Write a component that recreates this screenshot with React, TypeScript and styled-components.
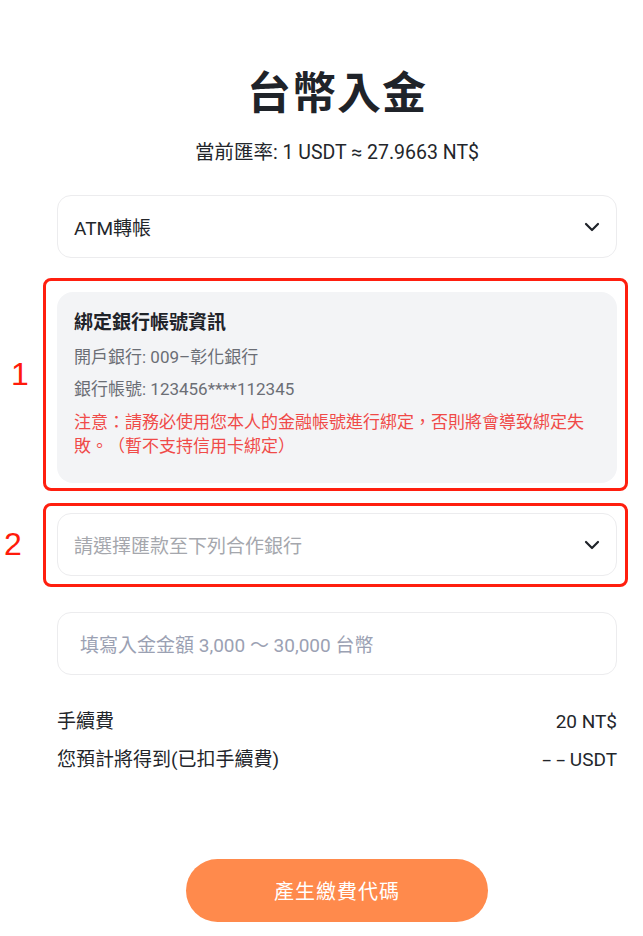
import React from "react";
import styled, { createGlobalStyle } from "styled-components";

const Global = createGlobalStyle`
  html, body { margin: 0; padding: 0; background: #ffffff; }
  body { font-family: Roboto, "Noto Sans CJK TC", "Noto Sans", sans-serif; -webkit-font-smoothing: antialiased; text-spacing-trim: space-all; }
  * { box-sizing: border-box; }
`;

const Page = styled.div`
  width: 643px;
  min-height: 936px;
  padding: 66px 26px 0 57px;
  display: flex;
  flex-direction: column;
`;

const Title = styled.h1`
  margin: 0;
  text-align: center;
  font-size: 44px;
  line-height: 56px;
  font-weight: 700;
  color: #1f2329;
  letter-spacing: 1px;
`;

const Rate = styled.div`
  margin-top: 18px;
  text-align: center;
  font-size: 19.5px;
  line-height: 26px;
  color: #23262b;
`;

const SelectBox = styled.div<{ $mt?: number }>`
  margin-top: ${(p) => p.$mt ?? 0}px;
  height: 63px;
  border: 1px solid #ececee;
  border-radius: 14px;
  background: #fff;
  display: flex;
  align-items: center;
  justify-content: space-between;
  padding: 0 16px 0 16px;
`;

const SelectText = styled.span<{ $placeholder?: boolean }>`
  font-size: 19px;
  color: ${(p) => (p.$placeholder ? "#a5a7ad" : "#23262b")};
`;

const Chevron = () => (
  <svg width="16" height="10" viewBox="0 0 16 10" fill="none">
    <path d="M2 2l6 6 6-6" stroke="#1f2329" strokeWidth="2.2" strokeLinecap="round" strokeLinejoin="round" />
  </svg>
);

const Highlight = styled.div<{ $mt: number; $pad: string }>`
  position: relative;
  margin: ${(p) => p.$mt}px -11px 0 -14px;
  padding: ${(p) => p.$pad};
  border: 3px solid #ff1f0f;
  border-radius: 8px;
`;

const Marker = styled.span<{ $left: number; $top: number }>`
  position: absolute;
  left: ${(p) => p.$left}px;
  top: ${(p) => p.$top}px;
  font-family: "Liberation Sans", Arial, sans-serif;
  font-size: 32px;
  line-height: 32px;
  color: #ff1a0a;
`;

const InfoCard = styled.div`
  background: #f3f4f6;
  border-radius: 16px;
  padding: 18px 17px 25px 17px;
  display: flex;
  flex-direction: column;
`;

const InfoTitle = styled.div`
  font-size: 19px;
  line-height: 26px;
  font-weight: 700;
  color: #1f2329;
  margin-bottom: 5px;
`;

const InfoLine = styled.div`
  font-size: 17px;
  line-height: 32px;
  color: #6b6e75;
`;

const Warning = styled.div`
  margin-top: 5px;
  font-size: 17px;
  line-height: 24px;
  color: #f04a48;
`;

const AmountInput = styled.div`
  margin-top: 25px;
  height: 63px;
  border: 1px solid #ececee;
  border-radius: 14px;
  display: flex;
  align-items: center;
  padding: 0 22px;
  font-size: 19px;
  color: #9ba1b3;
`;

const FeeList = styled.div`
  margin-top: 34px;
  display: flex;
  flex-direction: column;
  gap: 12px;
`;

const FeeRow = styled.div`
  display: flex;
  justify-content: space-between;
  align-items: center;
  font-size: 19px;
  line-height: 26px;
  color: #23262b;
`;

const Dashes = styled.span`
  display: inline-block;
  letter-spacing: 3px;
  margin-right: 5px;
  transform: scaleX(1.7);
  transform-origin: center;
`;

const SubmitButton = styled.button`
  align-self: center;
  margin-top: 86px;
  width: 302px;
  height: 63px;
  border: none;
  border-radius: 32px;
  background: #ff8a4c;
  color: #fff;
  font-family: inherit;
  font-size: 20px;
  letter-spacing: 1px;
`;

export default function App() {
  return (
    <>
      <Global />
      <Page>
        <Title>台幣入金</Title>
        <Rate>當前匯率: 1 USDT ≈ 27.9663 NT$</Rate>
        <SelectBox $mt={29}>
          <SelectText>ATM轉帳</SelectText>
          <Chevron />
        </SelectBox>
        <Highlight $mt={20} $pad="11px 8px 5px 11px">
          <Marker $left={-35} $top={77}>1</Marker>
          <InfoCard>
            <InfoTitle>綁定銀行帳號資訊</InfoTitle>
            <InfoLine>開戶銀行: 009–彰化銀行</InfoLine>
            <InfoLine>銀行帳號: 123456****112345</InfoLine>
            <Warning>注意：請務必使用您本人的金融帳號進行綁定，否則將會導致綁定失敗。（暫不支持信用卡綁定）</Warning>
          </InfoCard>
        </Highlight>
        <Highlight $mt={12} $pad="7px 8px 8px 11px">
          <Marker $left={-42} $top={22}>2</Marker>
          <SelectBox>
            <SelectText $placeholder>請選擇匯款至下列合作銀行</SelectText>
            <Chevron />
          </SelectBox>
        </Highlight>
        <AmountInput>填寫入金金額 3,000 ～ 30,000 台幣</AmountInput>
        <FeeList>
          <FeeRow>
            <span>手續費</span>
            <span>20 NT$</span>
          </FeeRow>
          <FeeRow>
            <span>您預計將得到(已扣手續費)</span>
            <span><Dashes>--</Dashes>USDT</span>
          </FeeRow>
        </FeeList>
        <SubmitButton>產生繳費代碼</SubmitButton>
      </Page>
    </>
  );
}
